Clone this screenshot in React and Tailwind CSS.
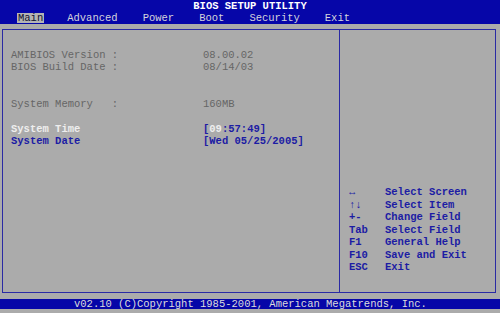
import React from 'react';

const menu = ['Main', 'Advanced', 'Power', 'Boot', 'Security', 'Exit'];

const help = [
  ['↔', 'Select Screen'],
  ['↑↓', 'Select Item'],
  ['+-', 'Change Field'],
  ['Tab', 'Select Field'],
  ['F1', 'General Help'],
  ['F10', 'Save and Exit'],
  ['ESC', 'Exit'],
];

export default function App() {
  return (
    <div
      className="w-[500px] h-[313px] bg-[#ababab] flex flex-col overflow-hidden text-[10.5px] leading-[12px] whitespace-pre"
      style={{ fontFamily: '"Liberation Mono", "DejaVu Sans Mono", monospace' }}
    >
      {/* Title + menu bar */}
      <header className="h-[24px] bg-[#0606a8] text-[#d4d4dc] flex flex-col">
        <div className="text-center font-bold text-white leading-[10px] pt-[1px]">BIOS SETUP UTILITY</div>
        <nav className="flex gap-[25px] pl-[17px] mt-[2px]">
          {menu.map((m, i) => (
            <span
              key={m}
              className={i === 0 ? 'bg-[#b4b4b4] text-[#101030] px-[1px] -mr-[2px] leading-[10px]' : 'leading-[10px]'}
            >
              {m}
            </span>
          ))}
        </nav>
      </header>

      {/* Main frame */}
      <div className="flex-1 pt-[5px] pl-[2px] pr-[4px] pb-[6px] flex">
        <div className="flex-1 flex border border-[#2a2aa4]">
          <section className="w-[337px] border-r border-[#2a2aa4] pt-[19px] pl-[8px]">
            <div className="text-[#666666]">
              <div className="flex"><span className="w-[192px]">AMIBIOS Version :</span><span>08.00.02</span></div>
              <div className="flex"><span className="w-[192px]">BIOS Build Date :</span><span>08/14/03</span></div>
              <div className="flex mt-[25px]"><span className="w-[192px]">System Memory   :</span><span>160MB</span></div>
            </div>
            <div className="mt-[13px] font-bold">
              <div className="flex">
                <span className="w-[192px] text-[#eeeeee]">System Time</span>
                <span className="text-[#1c1ca4]">[<span className="text-[#eeeeee]">09</span>:57:49]</span>
              </div>
              <div className="flex text-[#1c1ca4]">
                <span className="w-[192px]">System Date</span>
                <span>[Wed 05/25/2005]</span>
              </div>
            </div>
          </section>
          <aside className="flex-1 pt-[156px] pl-[9px] text-[#1c1ca4] font-bold">
            {help.map(([k, d]) => (
              <div key={k} className="flex leading-[12.5px]">
                <span className="w-[36px]">{k}</span>
                <span>{d}</span>
              </div>
            ))}
          </aside>
        </div>
      </div>

      {/* Footer */}
      <footer className="h-[10px] mb-[4px] bg-[#0606a8] text-[#dcdcdc] leading-[10px] pl-[74px]">
        v02.10 (C)Copyright 1985-2001, American Megatrends, Inc.
      </footer>
    </div>
  );
}
